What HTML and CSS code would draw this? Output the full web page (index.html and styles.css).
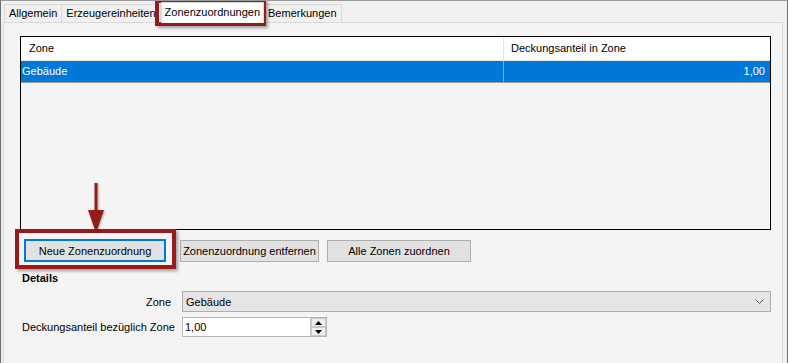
FILE: index.html
```html
<!DOCTYPE html>
<html lang="de">
<head>
    <meta charset="UTF-8">
    <title>Zonenzuordnungen</title>
    <link rel="stylesheet" href="styles.css">
</head>
<body>
    <div class="window">
        <div class="tabs">
            <div class="tab">Allgemein</div>
            <div class="tab">Erzeugereinheiten</div>
            <div class="tab active">Zonenzuordnungen</div>
            <div class="tab">Bemerkungen</div>
        </div>
        <div class="page">
            <div class="list">
                <div class="list-head">
                    <div class="col-zone">Zone</div>
                    <div class="col-share">Deckungsanteil in Zone</div>
                </div>
                <div class="list-row selected">
                    <div class="col-zone">Gebäude</div>
                    <div class="col-share num">1,00</div>
                </div>
            </div>
            <div class="buttons">
                <button class="btn btn-new focused">Neue Zonenzuordnung</button>
                <button class="btn btn-remove">Zonenzuordnung entfernen</button>
                <button class="btn btn-all">Alle Zonen zuordnen</button>
            </div>
            <div class="details">
                <div class="details-title">Details</div>
                <div class="field">
                    <label>Zone</label>
                    <div class="combo">
                        <span>Gebäude</span>
                        <svg width="9" height="6" viewBox="0 0 9 6"><path d="M0.5 0.5 L4.5 4.5 L8.5 0.5" fill="none" stroke="#555" stroke-width="1"/></svg>
                    </div>
                </div>
                <div class="field">
                    <label>Deckungsanteil bezüglich Zone</label>
                    <div class="spin">
                        <span>1,00</span>
                        <div class="spin-btns">
                            <div class="spin-up"><svg width="7" height="4" viewBox="0 0 7 4"><path d="M3.5 0 L7 4 L0 4 Z" fill="#000"/></svg></div>
                            <div class="spin-down"><svg width="7" height="4" viewBox="0 0 7 4"><path d="M0 0 L7 0 L3.5 4 Z" fill="#000"/></svg></div>
                        </div>
                    </div>
                </div>
            </div>
        </div>

        <!-- Markierungen im Screenshot -->
        <div class="mark mark-tab"></div>
        <div class="mark mark-btn"></div>
        <svg class="arrow" width="24" height="52" viewBox="0 0 24 52">
            <line x1="12" y1="0" x2="12" y2="30" stroke="#961b1b" stroke-width="3"/>
            <path d="M4 27 L20 27 L12 50 Z" fill="#961b1b"/>
        </svg>
    </div>
</body>
</html>
```

FILE: styles.css
```css
body {
    margin: 0;
    font-family: "Liberation Sans", Arial, sans-serif;
    font-size: 11px;
    color: #000;
    background-color: #f0f0f0;
}
.window {
    position: relative;
    height: 363px;
    box-sizing: border-box;
    border-top: 1px solid #9a9a9a;
    border-left: 1px solid #6d6d6d;
    border-right: 1px solid #6d6d6d;
    display: flex;
    flex-direction: column;
    overflow: hidden;
}
.tabs {
    display: flex;
    align-items: flex-end;
    height: 21px;
    padding-left: 3px;
}
.tab {
    height: 18px;
    box-sizing: border-box;
    line-height: 16px;
    padding: 0 4px;
    border: 1px solid #d9d9d9;
    border-bottom: none;
    margin-right: -1px;
    background-color: #f0f0f0;
    white-space: nowrap;
}
.tab.active {
    position: relative;
    z-index: 1;
    height: 21px;
    line-height: 18px;
    margin: 0 -1px -1px 1px;
    padding: 0 3px;
    background-color: #fff;
}
.page {
    flex: 1;
    margin: 0 4px 0 2px;
    border: 1px solid #d9d9d9;
    border-bottom: none;
    background-color: #f4f4f4;
    padding: 13px 11px 0 16px;
}
.list {
    height: 194px;
    box-sizing: border-box;
    border: 1px solid #000;
}
.list-head, .list-row {
    display: flex;
}
.list-head {
    height: 24px;
    background-color: #fff;
    border-bottom: 1px solid #e5e5e5;
    box-sizing: border-box;
    line-height: 23px;
}
.list-row {
    height: 22px;
    box-sizing: border-box;
    line-height: 21px;
    border-bottom: 1px solid #a0a0a0;
}
.list-row.selected {
    background-color: #0078d7;
    color: #fff;
}
.col-zone {
    width: 483px;
    border-right: 1px solid #e5e5e5;
    padding-left: 8px;
    box-sizing: border-box;
}
.col-share {
    flex: 1;
    padding-left: 7px;
}
.list-row .col-zone {
    padding-left: 1px;
    border-right-color: #a0a0a0;
}
.col-share.num {
    text-align: right;
    padding-right: 5px;
}
.buttons {
    display: flex;
    align-items: center;
    margin-top: 9px;
    padding-left: 4px;
}
.btn {
    height: 22px;
    font-family: inherit;
    font-size: 11px;
    color: #000;
    background-color: #e1e1e1;
    border: 1px solid #adadad;
    padding: 0;
    margin-right: 8px;
}
.btn.focused {
    border: 2px solid #0078d7;
    height: 23px;
    margin-right: 14px;
}
.btn-new { width: 142px; }
.btn-remove { width: 139px; }
.btn-all { width: 144px; }
.details {
    padding-left: 2px;
}
.details-title {
    font-weight: bold;
    margin-top: 9px;
    line-height: 14px;
}
.field {
    display: flex;
    align-items: center;
}
.field label {
    flex-shrink: 0;
    width: 149px;
    text-align: right;
    margin-right: 11px;
    white-space: nowrap;
}
.field:nth-child(2) {
    margin-top: 6px;
}
.field:nth-child(3) {
    margin-top: 5px;
}
.field:nth-child(3) label {
    text-align: left;
}
.combo {
    flex: 1;
    height: 21px;
    box-sizing: border-box;
    border: 1px solid #adadad;
    background-color: #e5e5e5;
    display: flex;
    align-items: center;
    justify-content: space-between;
    padding: 0 6px 0 3px;
}
.spin {
    width: 145px;
    height: 20px;
    box-sizing: border-box;
    border: 1px solid #b4b4b4;
    background-color: #fff;
    display: flex;
    align-items: center;
    justify-content: space-between;
    padding-left: 2px;
}
.spin-btns {
    display: flex;
    flex-direction: column;
    width: 15px;
    height: 18px;
    border-left: 1px solid #c8c8c8;
}
.spin-up, .spin-down {
    flex: 1;
    display: flex;
    align-items: center;
    justify-content: center;
    background-color: #f0f0f0;
    border: 1px solid #c8c8c8;
}
.mark {
    position: absolute;
    border: 4px solid #961b1b;
    box-shadow: 2px 2px 3px rgba(0, 0, 0, 0.35);
}
.mark-tab {
    left: 154px;
    top: -2px;
    width: 103px;
    height: 19px;
}
.mark-btn {
    left: 14px;
    top: 228px;
    width: 153px;
    height: 32px;
}
.arrow {
    position: absolute;
    left: 83px;
    top: 182px;
    filter: drop-shadow(1px 1px 1px rgba(0, 0, 0, 0.3));
}
```
